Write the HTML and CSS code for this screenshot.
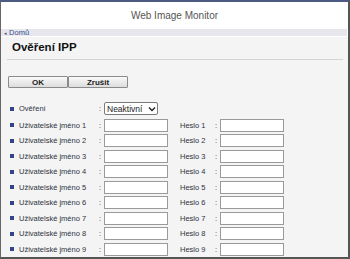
FILE: index.html
```html
<!DOCTYPE html>
<html lang="cs">
<head>
    <meta charset="UTF-8">
    <title>Web Image Monitor</title>
    <link rel="stylesheet" href="styles.css">
</head>
<body>
    <div class="frame">
        <div class="header">Web Image Monitor</div>
        <div class="crumb"><span class="crumb-arrow">◂</span> Domů</div>
        <div class="crumb-line"></div>

        <div class="content">
            <h1>Ověření IPP</h1>

            <div class="buttons">
                <button>OK</button>
                <button>Zrušit</button>
            </div>

            <div class="form">
                <div class="row first">
                    <span class="label"><i class="bullet"></i>Ověření</span>
                    <span class="colon">:</span>
                    <span class="select">Neaktivní
                        <svg width="8" height="6" viewBox="0 0 8 6"><path d="M1 1.5 L4 4.5 L7 1.5" fill="none" stroke="#222" stroke-width="1.4"/></svg>
                    </span>
                </div>
                <div class="row">
                    <span class="label"><i class="bullet"></i>Uživatelské jméno 1</span>
                    <span class="colon">:</span>
                    <input type="text">
                    <span class="pw-label">Heslo 1</span>
                    <span class="colon">:</span>
                    <input type="text">
                </div>
                <div class="row">
                    <span class="label"><i class="bullet"></i>Uživatelské jméno 2</span>
                    <span class="colon">:</span>
                    <input type="text">
                    <span class="pw-label">Heslo 2</span>
                    <span class="colon">:</span>
                    <input type="text">
                </div>
                <div class="row">
                    <span class="label"><i class="bullet"></i>Uživatelské jméno 3</span>
                    <span class="colon">:</span>
                    <input type="text">
                    <span class="pw-label">Heslo 3</span>
                    <span class="colon">:</span>
                    <input type="text">
                </div>
                <div class="row">
                    <span class="label"><i class="bullet"></i>Uživatelské jméno 4</span>
                    <span class="colon">:</span>
                    <input type="text">
                    <span class="pw-label">Heslo 4</span>
                    <span class="colon">:</span>
                    <input type="text">
                </div>
                <div class="row">
                    <span class="label"><i class="bullet"></i>Uživatelské jméno 5</span>
                    <span class="colon">:</span>
                    <input type="text">
                    <span class="pw-label">Heslo 5</span>
                    <span class="colon">:</span>
                    <input type="text">
                </div>
                <div class="row">
                    <span class="label"><i class="bullet"></i>Uživatelské jméno 6</span>
                    <span class="colon">:</span>
                    <input type="text">
                    <span class="pw-label">Heslo 6</span>
                    <span class="colon">:</span>
                    <input type="text">
                </div>
                <div class="row">
                    <span class="label"><i class="bullet"></i>Uživatelské jméno 7</span>
                    <span class="colon">:</span>
                    <input type="text">
                    <span class="pw-label">Heslo 7</span>
                    <span class="colon">:</span>
                    <input type="text">
                </div>
                <div class="row">
                    <span class="label"><i class="bullet"></i>Uživatelské jméno 8</span>
                    <span class="colon">:</span>
                    <input type="text">
                    <span class="pw-label">Heslo 8</span>
                    <span class="colon">:</span>
                    <input type="text">
                </div>
                <div class="row">
                    <span class="label"><i class="bullet"></i>Uživatelské jméno 9</span>
                    <span class="colon">:</span>
                    <input type="text">
                    <span class="pw-label">Heslo 9</span>
                    <span class="colon">:</span>
                    <input type="text">
                </div>
            </div>
        </div>
    </div>
</body>
</html>
```

FILE: styles.css
```css
html, body {
    margin: 0;
    padding: 0;
}
body {
    font-family: 'Liberation Sans', Arial, sans-serif;
    background-color: #ffffff;
}
.frame {
    width: 350px;
    height: 259px;
    box-sizing: border-box;
    border-top: 2px solid #4c5a84;
    border-left: 1px solid #666;
    border-right: 2px solid #555;
    border-bottom: 2px solid #555;
    overflow: hidden;
    display: flex;
    flex-direction: column;
}
.header {
    height: 27px;
    line-height: 27px;
    text-align: center;
    font-size: 10px;
    color: #555;
    background-color: #fff;
}
.crumb {
    height: 7px;
    line-height: 8px;
    font-size: 7.5px;
    color: #3b4f92;
    background-color: #e6e6ec;
    padding-left: 3px;
    margin-right: 1px;
}
.crumb-arrow {
    font-size: 5px;
}
.crumb-line {
    height: 2px;
    margin-top: 1px;
    background-color: #c9c9c9;
}
.content {
    flex: 1;
    background-color: #f4f4f4;
    padding: 0 5px 0 6px;
}
h1 {
    margin: 0;
    padding: 3px 0 0 5px;
    height: 19px;
    line-height: 14px;
    font-size: 11.5px;
    font-weight: bold;
    color: #111;
    border-bottom: 1px solid #d4d4d4;
}
.buttons {
    display: flex;
    margin-top: 16px;
    padding-left: 1px;
}
.buttons button {
    width: 60px;
    height: 12px;
    padding: 0;
    font-family: 'Liberation Sans', Arial, sans-serif;
    font-size: 8px;
    font-weight: bold;
    color: #222;
    background: linear-gradient(#fafafa, #dcdcdc);
    border: 1px solid #8a8a8a;
    border-radius: 1px;
}
.form {
    margin-top: 12px;
    font-size: 7.5px;
    color: #2e3340;
}
.row {
    display: flex;
    align-items: center;
    height: 15.5px;
}
.row.first {
    height: 17px;
    margin-bottom: 0.5px;
}
.label {
    width: 87px;
    display: flex;
    align-items: center;
    padding-left: 3px;
}
.bullet {
    display: inline-block;
    width: 4px;
    height: 4px;
    background-color: #34448a;
    margin-right: 5px;
}
.colon {
    width: 5px;
    padding-left: 2px;
}
.select {
    display: flex;
    align-items: center;
    justify-content: space-between;
    width: 49px;
    height: 11px;
    padding: 0 1px 0 2px;
    border: 1px solid #7a7a7a;
    border-radius: 2px;
    background-color: #fff;
    font-size: 8.5px;
    color: #222;
}
input {
    width: 64px;
    height: 13px;
    box-sizing: border-box;
    margin: 0;
    padding: 0 2px;
    border: 1px solid #9a9a9a;
    background-color: #fff;
    font-size: 8px;
}
.pw-label {
    width: 33px;
    margin-left: 12px;
}
```
